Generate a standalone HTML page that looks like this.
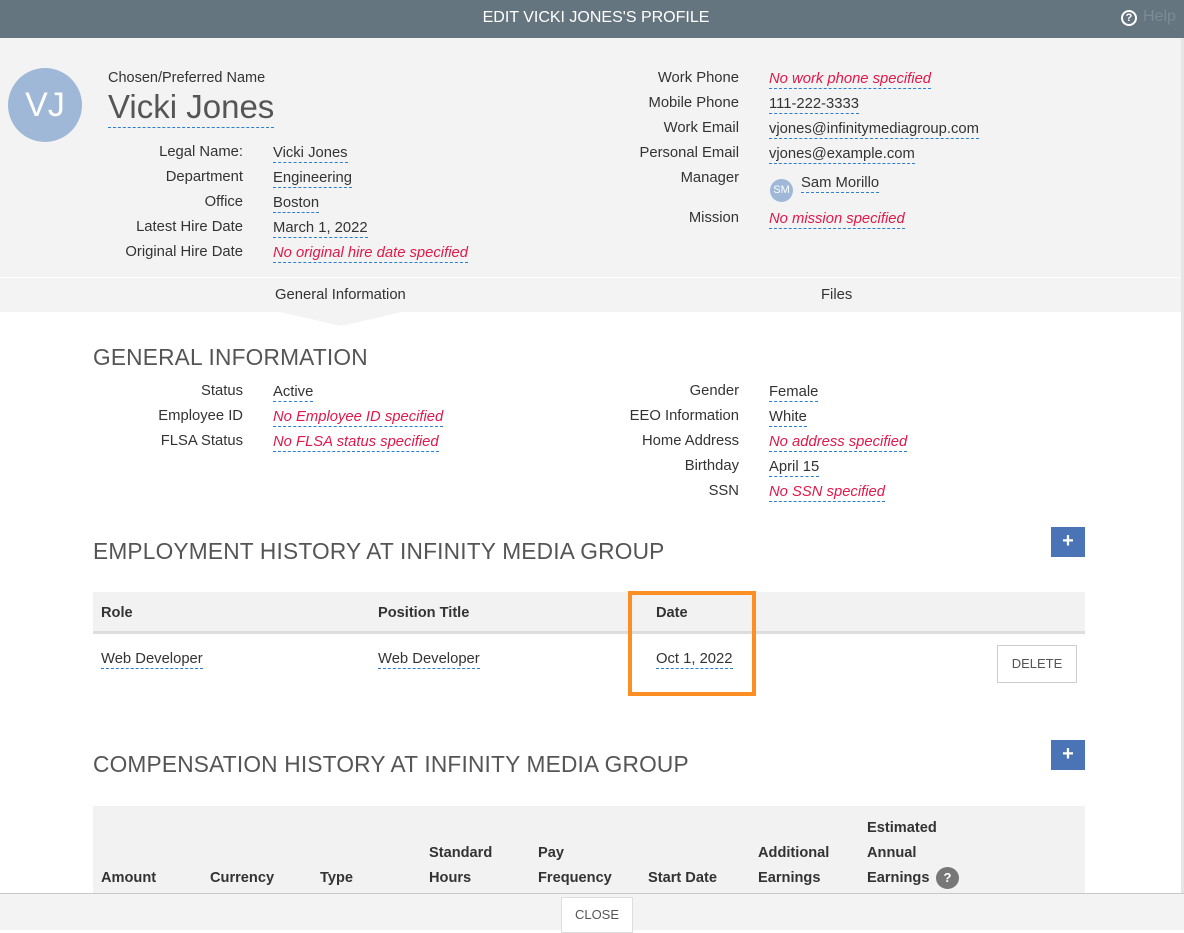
<!DOCTYPE html>
<html><head><meta charset="utf-8"><style>
*{margin:0;padding:0;box-sizing:border-box}
body{width:1184px;height:930px;overflow:hidden;background:#fff;font-family:"Liberation Sans",sans-serif;font-size:14.8px;color:#333;position:relative}
.a{position:absolute;white-space:nowrap}
.l{position:absolute;text-align:right;white-space:nowrap}
.v{position:absolute;white-space:nowrap;border-bottom:1px dashed #2a7fd0;line-height:18px}
.r{color:#e0194b;font-style:italic}
.h{position:absolute;font-size:22.7px;color:#555;letter-spacing:0.2px;white-space:nowrap}
.plus{position:absolute;left:1051px;width:34px;height:30px;background:#4a74b5;color:#fff;font-weight:bold;font-size:20px;text-align:center;line-height:29px}
.th{position:absolute;font-weight:bold;font-size:14.6px;color:#333;white-space:nowrap}
</style></head><body>
<div class="a" style="left:0;top:0;width:1184px;height:38px;background:#65757f"></div>
<div class="a" style="left:0;top:9px;width:1192px;text-align:center;color:#fff;font-size:16px">EDIT VICKI JONES'S PROFILE</div>
<div class="a" style="left:1121px;top:10px;width:16px;height:16px;border:2px solid #fff;border-radius:50%;color:#fff;font-size:11px;font-weight:bold;text-align:center;line-height:12px">?</div>
<div class="a" style="left:1143px;top:8px;color:#7d8b93;font-size:16px">Help</div>
<div class="a" style="left:0;top:38px;width:1181px;height:239px;background:#f3f3f3"></div>
<div class="a" style="left:0;top:278px;width:1181px;height:34px;background:#f3f3f3"></div>
<div class="a" style="left:1181px;top:38px;width:3px;height:855px;background:#e6e6e6"></div>
<svg class="a" style="left:280px;top:312px" width="122" height="15"><polygon points="0,0 122,0 61,14" fill="#f3f3f3"/></svg>
<div class="a" style="left:8px;top:68px;width:74px;height:74px;border-radius:50%;background:#9fb8d8;color:#fff;font-size:34px;text-align:center;line-height:74px">VJ</div>
<div class="a" style="left:108px;top:70px;font-size:14.5px">Chosen/Preferred Name</div>
<div class="v" style="left:108px;top:87px;font-size:33px;line-height:40px;color:#555">Vicki Jones</div>
<div class="l" style="right:941px;top:144px">Legal Name:</div><div class="v" style="left:273px;top:144px">Vicki Jones</div>
<div class="l" style="right:941px;top:169px">Department</div><div class="v" style="left:273px;top:169px">Engineering</div>
<div class="l" style="right:941px;top:194px">Office</div><div class="v" style="left:273px;top:194px">Boston</div>
<div class="l" style="right:941px;top:219px">Latest Hire Date</div><div class="v" style="left:273px;top:219px">March 1, 2022</div>
<div class="l" style="right:941px;top:244px">Original Hire Date</div><div class="v r" style="left:273px;top:244px">No original hire date specified</div>
<div class="l" style="right:445px;top:70px">Work Phone</div><div class="v r" style="left:769px;top:70px">No work phone specified</div>
<div class="l" style="right:445px;top:95px">Mobile Phone</div><div class="v" style="left:769px;top:95px">111-222-3333</div>
<div class="l" style="right:445px;top:120px">Work Email</div><div class="v" style="left:769px;top:120px">vjones@infinitymediagroup.com</div>
<div class="l" style="right:445px;top:145px">Personal Email</div><div class="v" style="left:769px;top:145px">vjones@example.com</div>
<div class="l" style="right:445px;top:170px">Manager</div>
<div class="a" style="left:770px;top:179px;width:23px;height:23px;border-radius:50%;background:#9fb8d8;color:#fff;font-size:11px;text-align:center;line-height:23px">SM</div>
<div class="v" style="left:801px;top:174px">Sam Morillo</div>
<div class="l" style="right:445px;top:210px">Mission</div><div class="v r" style="left:769px;top:210px">No mission specified</div>
<div class="a" style="left:275px;top:287px">General Information</div>
<div class="a" style="left:821px;top:287px">Files</div>
<div class="h" style="left:93px;top:344px">GENERAL INFORMATION</div>
<div class="l" style="right:941px;top:383px">Status</div><div class="v" style="left:273px;top:383px">Active</div>
<div class="l" style="right:941px;top:408px">Employee ID</div><div class="v r" style="left:273px;top:408px">No Employee ID specified</div>
<div class="l" style="right:941px;top:433px">FLSA Status</div><div class="v r" style="left:273px;top:433px">No FLSA status specified</div>
<div class="l" style="right:445px;top:383px">Gender</div><div class="v" style="left:769px;top:383px">Female</div>
<div class="l" style="right:445px;top:408px">EEO Information</div><div class="v" style="left:769px;top:408px">White</div>
<div class="l" style="right:445px;top:433px">Home Address</div><div class="v r" style="left:769px;top:433px">No address specified</div>
<div class="l" style="right:445px;top:458px">Birthday</div><div class="v" style="left:769px;top:458px">April 15</div>
<div class="l" style="right:445px;top:483px">SSN</div><div class="v r" style="left:769px;top:483px">No SSN specified</div>
<div class="h" style="left:93px;top:538px">EMPLOYMENT HISTORY AT INFINITY MEDIA GROUP</div>
<div class="plus" style="top:527px">+</div>
<div class="a" style="left:93px;top:592px;width:992px;height:42px;background:#f2f2f2;border-bottom:3px solid #ddd"></div>
<div class="th" style="left:101px;top:605px">Role</div>
<div class="th" style="left:378px;top:605px">Position Title</div>
<div class="th" style="left:656px;top:605px">Date</div>
<div class="v" style="left:101px;top:650px">Web Developer</div>
<div class="v" style="left:378px;top:650px">Web Developer</div>
<div class="v" style="left:656px;top:650px">Oct 1, 2022</div>
<div class="a" style="left:997px;top:645px;width:80px;height:38px;border:1px solid #ccc;background:#fff;text-align:center;line-height:36px;font-size:13px;color:#555">DELETE</div>
<div class="a" style="left:628px;top:591px;width:128px;height:105px;border:4px solid #fb8f24"></div>
<div class="h" style="left:93px;top:751px">COMPENSATION HISTORY AT INFINITY MEDIA GROUP</div>
<div class="plus" style="top:740px">+</div>
<div class="a" style="left:93px;top:806px;width:992px;height:87px;background:#f2f2f2"></div>
<div class="th" style="left:101px;top:870px">Amount</div>
<div class="th" style="left:210px;top:870px">Currency</div>
<div class="th" style="left:320px;top:870px">Type</div>
<div class="th" style="left:429px;top:841px;line-height:25px">Standard<br>Hours</div>
<div class="th" style="left:538px;top:841px;line-height:25px">Pay<br>Frequency</div>
<div class="th" style="left:648px;top:870px">Start Date</div>
<div class="th" style="left:758px;top:841px;line-height:25px">Additional<br>Earnings</div>
<div class="th" style="left:867px;top:816px;line-height:25px">Estimated<br>Annual<br>Earnings</div>
<div class="a" style="left:936px;top:867px;width:23px;height:22px;border-radius:50%;background:#777;color:#fff;font-weight:bold;font-size:13px;text-align:center;line-height:22px">?</div>
<div class="a" style="left:0;top:893px;width:1184px;height:37px;background:#f3f3f3;border-top:1px solid #c8c8c8"></div>
<div class="a" style="left:561px;top:897px;width:72px;height:36px;background:#fff;border:1px solid #ddd;text-align:center;line-height:34px;font-size:13px;color:#555">CLOSE</div>
</body></html>
